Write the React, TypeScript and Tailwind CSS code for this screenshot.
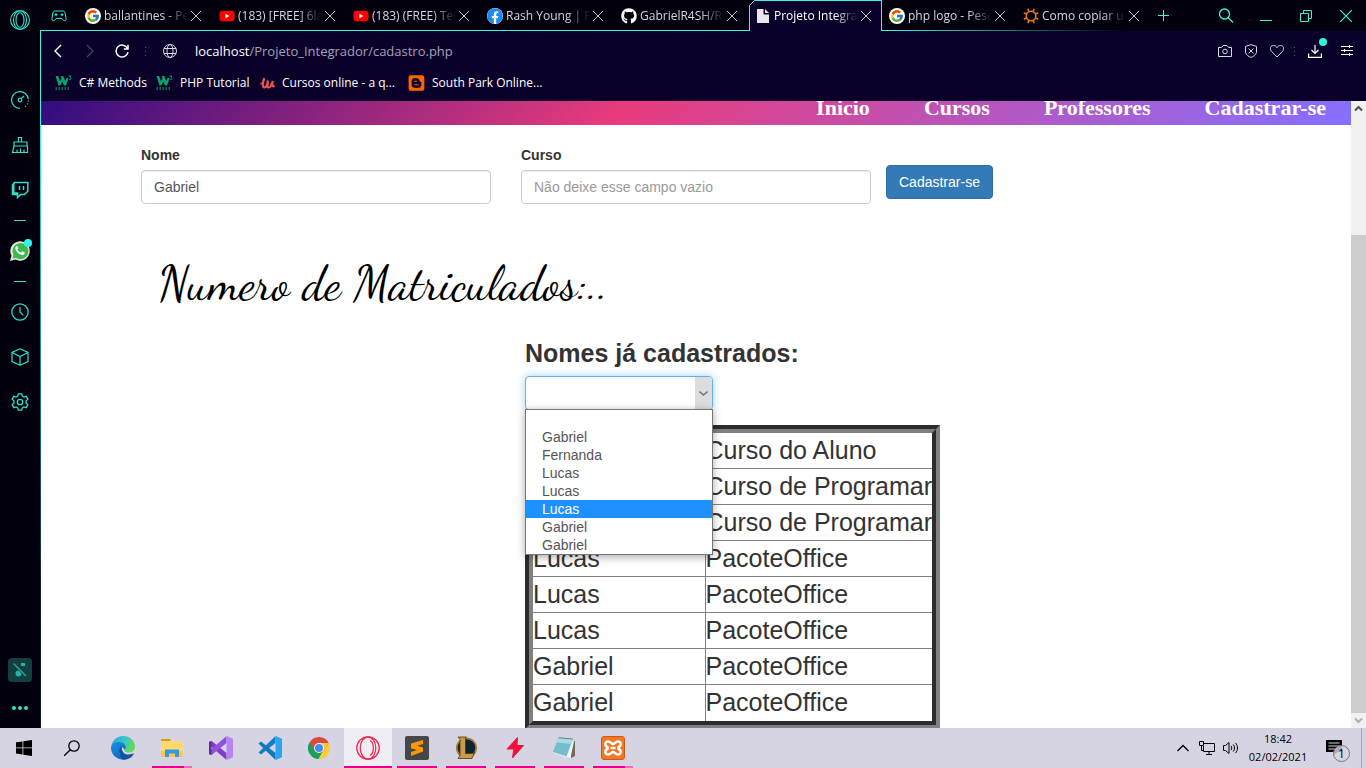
import type { ReactNode } from "react";
import { FcGoogle } from "react-icons/fc";
import { FaYoutube, FaFacebook, FaGithub, FaBlogger } from "react-icons/fa";

const UI = "font-['Open_Sans','Noto_Sans',sans-serif]";

function Stroke({ children, size = 18, w = 1, className = "" }: { children: ReactNode; size?: number; w?: number; className?: string }) {
  return (
    <svg width={size} height={size} viewBox={`0 0 ${size} ${size}`} fill="none" stroke="currentColor" strokeWidth={w} className={`shrink-0 ${className}`} aria-hidden="true">
      {children}
    </svg>
  );
}

const Close = () => (
  <Stroke size={12}><path d="M1 1l10 10M11 1L1 11" /></Stroke>
);

const GoogleBadge = () => (
  <span className="flex size-4 shrink-0 items-center justify-center rounded-full bg-white"><FcGoogle size={14} /></span>
);

const PageIcon = () => (
  <svg width="16" height="16" viewBox="0 0 16 16" className="shrink-0" aria-hidden="true">
    <path d="M2 1h6.500v5.500H14V15H2z" fill="#e8e8ec" />
    <path d="M10 1l4 4h-4z" fill="#e8e8ec" />
  </svg>
);

const SunIcon = () => (
  <svg width="16" height="16" viewBox="0 0 16 16" className="shrink-0" fill="none" stroke="#e87b1e" aria-hidden="true">
    <circle cx="8" cy="8" r="4.8" strokeWidth="1.6" />
    <path d="M5.8 3.5L4.9.8M10.2 3.5l.9-2.7M12.5 5.8l2.7-.9M12.5 10.2l2.7.9M10.2 12.5l.9 2.7M5.8 12.5l-.9 2.7M3.5 10.2l-2.7.9M3.5 5.8L.8 4.9" strokeWidth="1.6" />
  </svg>
);

const YoutubeIcon = () => (
  <span className="relative flex size-4 shrink-0 items-center justify-center">
    <span className="absolute size-1.5 bg-white" />
    <FaYoutube size={16} color="#ff0000" className="relative" />
  </span>
);

const FacebookIcon = () => (
  <span className="flex size-4 shrink-0 items-center justify-center rounded-full bg-white"><FaFacebook size={16} color="#1689f5" /></span>
);

const tabs: { title: string; icon: ReactNode; active?: boolean }[] = [
  { title: "ballantines - Pe", icon: <GoogleBadge /> },
  { title: "(183) [FREE] 6la", icon: <YoutubeIcon /> },
  { title: "(183) (FREE) Tet", icon: <YoutubeIcon /> },
  { title: "Rash Young | Fa", icon: <FacebookIcon /> },
  { title: "GabrielR4SH/Re", icon: <FaGithub size={16} color="#fff" className="shrink-0" /> },
  { title: "Projeto Integra", icon: <PageIcon />, active: true },
  { title: "php logo - Pesc", icon: <GoogleBadge /> },
  { title: "Como copiar u", icon: <SunIcon /> },
];

function TabBar() {
  return (
    <header className="relative flex h-[31px] shrink-0 bg-[#03000d] text-[#3df5dc]">
      <span className="absolute inset-x-0 bottom-0 h-px bg-linear-to-r from-[#3df5dc] from-64% to-transparent to-82%" />
      <button aria-label="GX Corner" className="flex w-[38px] shrink-0 items-center justify-center pr-0.5">
        <Stroke size={16} w={1}>
          <path d="M4.500 3h7C13.500 3 14 4.200 14.300 6l.8 4.500c.3 2.500-2.200 2.900-3.600.9l-.8-1H5.300l-.8 1C3.100 13.400.6 13 .9 10.500L1.700 6C2 4.200 2.500 3 4.500 3z" />
          <path d="M3.500 6.700h3M5 5.200v3M9.500 6.700h3M11 5.200v3" />
        </Stroke>
      </button>
      <nav aria-label="Abas" className="flex">
        {tabs.map((t, i) => (
          <div
            key={i}
            className={
              t.active
                ? "relative mr-px flex w-[133px] items-center border-x border-t border-[#3df5dc] bg-[#0b0029] pl-[5px] text-white"
                : "flex w-[134px] items-center border-x border-t border-transparent pl-[5px] text-[#d5d5da]"
            }
          >
            {t.active && (
              <svg width="7" height="7" viewBox="0 0 7 7" className="absolute -top-px -left-px" aria-hidden="true">
                <path d="M0 0H6L0 6z" fill="#03000d" />
                <path d="M.5 7V5.500L5.500.5H7" fill="none" stroke="#3df5dc" />
              </svg>
            )}
            {t.icon}
            <a href="#" className="ml-[3px] w-[84px] shrink-0 text-[12px] leading-5 whitespace-nowrap [mask-image:linear-gradient(to_right,black_72%,transparent)]">{t.title}</a>
            <button aria-label="Fechar aba" className="flex size-4 shrink-0 items-center justify-center text-[#c5c5cc]"><Close /></button>
          </div>
        ))}
      </nav>
      <button aria-label="Nova aba" className="flex w-6 items-center justify-center"><Stroke size={11}><path d="M0 5.500h11M5.500 0v11" /></Stroke></button>
      <div className="ml-auto flex">
        <button aria-label="Pesquisar abas" className="flex w-10 items-center justify-center"><Stroke size={16} w={1.3}><circle cx="6.500" cy="6" r="5" /><path d="M10 9.500l5 5" /></Stroke></button>
        <button aria-label="Minimizar" className="flex w-10 items-center justify-center"><Stroke size={12}><path d="M0 10.500h12" /></Stroke></button>
        <button aria-label="Restaurar" className="flex w-10 items-center justify-center"><Stroke size={12}><path d="M.5 3.500h8v8h-8zM3.500 3V.5h8v8H9" /></Stroke></button>
        <button aria-label="Fechar" className="flex w-10 items-center justify-center"><Stroke size={12} w={1.2}><path d="M0 0l12 12M12 0L0 12" /></Stroke></button>
      </div>
    </header>
  );
}

const Dots = () => (
  <span className="flex flex-col gap-[3px]">
    <i className="size-[1px] bg-[#5b5474]" /><i className="size-[1px] bg-[#5b5474]" /><i className="size-[1px] bg-[#5b5474]" />
  </span>
);

function AddressBar() {
  return (
    <div className="flex h-10 shrink-0 items-center text-[#d8d6e0]">
      <button aria-label="Voltar" className="flex w-[33px] justify-center"><Stroke size={14} w={1.4} className="text-white"><path d="M10 1L4 7l6 6" /></Stroke></button>
      <button aria-label="Avançar" className="flex w-8 justify-center"><Stroke size={14} w={1.2} className="text-[#4a4260]"><path d="M4 1l6 6-6 6" /></Stroke></button>
      <button aria-label="Recarregar" className="flex w-8 justify-center"><Stroke size={14} w={1.5} className="text-white"><path d="M12.500 4.500A6 6 0 1 0 13 8M13 .8v4.200H8.800" /></Stroke></button>
      <span className="flex w-[14px] justify-center"><Dots /></span>
      <span className="flex w-[36px] justify-center">
        <Stroke size={14}><circle cx="7" cy="7" r="6.500" /><ellipse cx="7" cy="7" rx="3" ry="6.500" /><path d="M1 4.500h12M1 9.500h12" /></Stroke>
      </span>
      <p className="ml-[7px] flex-1 text-[13px] leading-5 text-[#a5a0b8]"><span className="text-white">localhost</span>/Projeto_Integrador/cadastro.php</p>
      <div className="flex items-center pr-[13px]">
        <button aria-label="Captura" className="flex w-[26px] justify-center"><Stroke size={14}><path d="M.5 3.500h3L5 1.500h4l1.500 2h3v9H.5z" /><circle cx="7" cy="7.500" r="2.300" /></Stroke></button>
        <button aria-label="Bloqueador" className="flex w-[26px] justify-center"><Stroke size={14}><path d="M7 .6l5.500 1.800v6C12 11 9 12.800 7 13.400 5 12.800 2 11 1.500 8.400v-6zM4.500 4.500l5 5M9.500 4.500l-5 5" /></Stroke></button>
        <button aria-label="Favoritar" className="flex w-[26px] justify-center"><Stroke size={14}><path d="M7 13L1.500 7.300C-.8 4.500.8 1.500 3.500 1.500 5.300 1.500 6.400 2.500 7 3.700c.6-1.200 1.700-2.200 3.500-2.200 2.700 0 4.300 3 2 5.800z" /></Stroke></button>
        <span className="flex w-2 justify-center"><Dots /></span>
        <button aria-label="Downloads" className="relative flex w-[34px] justify-center text-white">
          <Stroke size={14} w={1.2}><path d="M7 1v8.500M3.500 6L7 9.500 10.500 6M.6 9.500v3.900h12.800V9.500" /></Stroke>
          <i className="absolute -top-1.5 right-[5px] size-2 rounded-full bg-[#2ff5e0]" />
        </button>
        <button aria-label="Configuração fácil" className="ml-[9px] flex justify-center text-white"><Stroke size={12}><path d="M0 1.500h12M0 5.500h12M0 9.500h12M8.500 0v3M3.500 4v3M8.500 8v3" /></Stroke></button>
      </div>
    </div>
  );
}

const W3 = () => (
  <svg width="17" height="16" viewBox="0 0 17 16" className="shrink-0" aria-hidden="true">
    <path d="M.5 1h2.600l1.900 5 1.500-3L5.800 1H8.200l2.100 5 1.200-3h2.200L11 10.500H9L7.300 6.500 5.300 10.500H3.500z" fill="#06a469" />
    <path d="M13.500 1h2.500l-1 1.500c1.500.3 1 2.600-1 2" fill="none" stroke="#06a469" />
    <path d="M.5 13.500h2M3.500 13.500h2M6.500 13.500h2M9.500 13.500h2M12.500 13.500h2" stroke="#04704b" strokeWidth="3" strokeDasharray="1.500 .5" />
  </svg>
);
const Udemy = () => (
  <svg width="16" height="16" viewBox="0 0 16 16" fill="none" stroke="#ec5252" strokeLinecap="round" className="shrink-0" aria-hidden="true">
    <path d="M1.800 9C4.200 7.500 5.300 5 4.800 4" strokeWidth="1.400" />
    <path d="M5 4c-1.300 3-1.800 8.200.3 8.500C7.300 12.600 8.500 8.500 9 5.500c-.8 3.500-.8 7 .8 7 1.800 0 2.700-2.500 4-6.500-.8 3-.8 5.800 1 5.200" strokeWidth="2.200" />
  </svg>
);

function Bookmarks() {
  const items: { label: string; icon: ReactNode; cls: string }[] = [
    { label: "C# Methods", icon: <W3 />, cls: "w-[101px]" },
    { label: "PHP Tutorial", icon: <W3 />, cls: "w-[102px]" },
    { label: "Cursos online - a q...", icon: <Udemy />, cls: "w-[150px]" },
    { label: "South Park Online...", icon: <FaBlogger size={18} color="#ff6600" />, cls: "w-[150px]" },
  ];
  return (
    <nav aria-label="Favoritos" className="flex h-[30px] shrink-0 items-start pt-0.5 pl-[14px] text-white">
      {items.map((b) => (
        <a key={b.label} href="#" className={`flex items-center gap-[7px] text-[12px] leading-5 whitespace-nowrap ${b.cls}`}>
          <span className="flex w-[17px] shrink-0 justify-center">{b.icon}</span>{b.label}
        </a>
      ))}
    </nav>
  );
}

function Sidebar() {
  const btn = "flex h-[45px] w-full items-center justify-center";
  return (
    <aside className="flex w-10 shrink-0 flex-col items-center bg-[#03000d] text-[#2fe0cb]">
      <button aria-label="Menu" className="flex h-10 w-full items-center justify-center">
        <Stroke size={20} w={1.1}><circle cx="10" cy="10" r="9.400" /><ellipse cx="10" cy="10" rx="6.500" ry="9.200" /><ellipse cx="10" cy="10" rx="4" ry="7.300" /></Stroke>
      </button>
      <button aria-label="GX Control" className="mt-[37px] flex h-[45px] w-full items-center justify-center">
        <Stroke size={18} w={1.2}><path d="M9 17.400A8.400 8.400 0 1 1 17.300 8" /><path d="M17.300 9.500A8.400 8.400 0 0 1 13 16.500" strokeDasharray="1 2" /><circle cx="9" cy="9" r="1.800" /><path d="M10.300 7.700L13 5" /></Stroke>
      </button>
      <button aria-label="Limpeza" className={btn}><Stroke size={18} w={1.2}><path d="M7.500 6V1.500h3V6M3 6h13v4H3zM3 10l-1.500 6.500h15V10M6 16.500v-3M9.500 16.500v-4M13 16.500v-3" /></Stroke></button>
      <button aria-label="Twitch" className={btn}>
        <Stroke size={18} w={1.5}><path d="M3.500 1.500h13.300v8.700l-3.300 3.300H9.800L6.500 16.500v-3H1.500V4z" /><path d="M1.500 3.500l2-2v9.700h3.800v3l-1 2.500v-3H1.500z" fill="currentColor" stroke="none" /><path d="M8.500 5v4M12.500 5v4" /></Stroke>
      </button>
      <hr className="mt-2 mb-[7px] w-3 border-[#2fe0cb]" />
      <button aria-label="WhatsApp" className="relative flex h-[46px] w-full items-center justify-center">
        <svg width="22" height="22" viewBox="0 0 22 22" aria-hidden="true">
          <path d="M1 21l1.500-5.400A9.700 9.700 0 1 1 6.400 19.500z" fill="#e4e7e4" />
          <path d="M3.500 18.600l1-3.600A8 8 0 1 1 7 17.700z" fill="#3fb84e" />
          <path d="M7.200 6.200c-1.700 1.400-1 3.800 1 6 2.200 2.400 5 3.600 6.800 2.200 1-.9.900-1.800.3-2.100l-1.700-.9c-.7-.3-1 .8-1.500 1-1 .1-3.400-2-3.500-3 .1-.4 1-.8.800-1.400L8.600 6.300c-.3-.6-.9-.5-1.400-.1z" fill="#eef3ee" />
        </svg>
        <i className="absolute top-[11px] right-[8px] size-2 rounded-full bg-[#2ff5f0]" />
      </button>
      <hr className="my-[7px] w-3 border-[#2fe0cb]" />
      <button aria-label="Histórico" className={btn}><Stroke size={18} w={1.2}><circle cx="9" cy="9" r="8.200" /><path d="M9 4v5l3.300 3.300" /></Stroke></button>
      <button aria-label="Extensões" className={btn}><Stroke size={18} w={1.2}><path d="M9 .8l8 3.700v9L9 17.200l-8-3.700v-9zM1 4.500l8 4 8-4M9 8.500v8.700" /></Stroke></button>
      <button aria-label="Configurações" className={btn}>
        <Stroke size={18} w={1.3}><circle cx="9" cy="9" r="2.700" /><path d="M7.300.8h3.400l.6 2.400 1.500.9 2.400-.8 1.700 2.900-1.800 1.700v2.200l1.800 1.700-1.700 2.900-2.400-.8-1.500.9-.6 2.400H7.300l-.6-2.400-1.500-.9-2.400.8-1.700-2.900 1.800-1.700V7.900L1.100 6.200l1.700-2.900 2.400.8 1.500-.9z" /></Stroke>
      </button>
      <button aria-label="Player" className="mt-auto flex size-6 items-center justify-center rounded bg-[#11403f] text-[#27b0a3]">
        <Stroke size={16} w={1.300}><circle cx="6.500" cy="11.500" r="3" fill="currentColor" stroke="none" /><path d="M9 11V1h4v3H9" fill="currentColor" stroke="none" /><path d="M1 0l14 14" stroke="#11403f" strokeWidth="4" /><path d="M1.500 1.500L14 14" /></Stroke>
      </button>
      <button aria-label="Mais" className="mt-[14px] mb-[8px] flex h-6 w-full items-center justify-center gap-0.5">
        <i className="size-1 rounded-full bg-current" /><i className="size-1 rounded-full bg-current" /><i className="size-1 rounded-full bg-current" />
      </button>
    </aside>
  );
}

const rows: [string, string][] = [
  ["Gabriel", "Curso de Programar"],
  ["Fernanda", "Curso de Programar"],
  ["Lucas", "PacoteOffice"],
  ["Lucas", "PacoteOffice"],
  ["Lucas", "PacoteOffice"],
  ["Gabriel", "PacoteOffice"],
  ["Gabriel", "PacoteOffice"],
];

function Page() {
  const field = "h-[34px] w-full rounded border border-[#cccccc] px-3 text-sm text-[#555555] shadow-[inset_0_1px_1px_rgba(0,0,0,0.075)] placeholder:text-[#999999]";
  const cell = "border border-[#808080] p-0 text-left font-normal whitespace-nowrap";
  return (
    <main className="min-w-0 flex-1 overflow-hidden bg-white font-['Liberation_Sans',Arial,sans-serif] text-[#333333]">
      <div className="flex h-6 flex-col justify-end overflow-hidden">
        <header className="flex h-[180px] shrink-0 items-end justify-end bg-[linear-gradient(135deg,#000080,#e93b7d_50%,#8470ff)] pr-[25px]">
          <nav className="flex gap-[54px] pb-1 font-['Liberation_Serif','Times_New_Roman',serif] text-[22px] leading-[26px] font-bold text-white">
            <a href="#">Inicio</a><a href="#">Cursos</a><a href="#">Professores</a><a href="#">Cadastrar-se</a>
          </nav>
        </header>
      </div>
      <form className="ml-[100px] flex items-start gap-[15px] pt-5 text-sm leading-5">
        <div className="flex gap-[30px]">
          <div className="w-[350px]">
            <label htmlFor="nome" className="mb-[5px] block font-bold">Nome</label>
            <input id="nome" defaultValue="Gabriel" className={field} />
          </div>
          <div className="w-[350px]">
            <label htmlFor="curso" className="mb-[5px] block font-bold">Curso</label>
            <input id="curso" placeholder="Não deixe esse campo vazio" className={field} />
          </div>
        </div>
        <button type="button" className="mt-5 h-[34px] rounded border border-[#2e6da4] bg-[#337ab7] px-3 text-white">Cadastrar-se</button>
      </form>
      <h1 className="mt-[50px] ml-[117px] font-['Dancing_Script','Liberation_Serif',cursive] text-[48px] leading-[60px] text-black">Numero de Matriculados:..</h1>
      <section className="ml-[484px] w-fit pt-[22px] text-[25px]">
        <label htmlFor="nomes" className="block leading-[35px] font-bold">Nomes já cadastrados:</label>
        <div className="relative mt-[5px] w-[188px] text-sm">
          <select id="nomes" defaultValue="" className="block h-[34px] w-full appearance-none rounded border border-[#66afe9] bg-white px-3 text-[#555555] shadow-[0_0_8px_rgba(102,175,233,0.6)] outline-none">
            <option value=""></option>
          </select>
          <span className="pointer-events-none absolute inset-y-px right-px flex w-[17px] items-center justify-center rounded-r-[3px] bg-[#dddddd] text-[#777777]">
            <Stroke size={9} w={1.6}><path d="M.5 2.500l4 3.500 4-3.500" /></Stroke>
          </span>
          <ul role="listbox" aria-label="Nomes" className="absolute top-full left-0 z-10 -mt-px w-full border border-[#767676] bg-white leading-[18px] text-[#555555] shadow-[0_2px_8px_rgba(0,0,0,0.35)]">
            {["", "Gabriel", "Fernanda", "Lucas", "Lucas", "Lucas", "Gabriel", "Gabriel"].map((n, i) => (
              <li key={i} role="option" aria-selected={i === 5} className={i === 5 ? "h-[18px] bg-[#1e90ff] px-4 text-white" : "h-[18px] px-4"}>{n}</li>
            ))}
          </ul>
        </div>
        <div className="mt-[15px] border-8 border-[#808080] [border-style:groove]">
          <table className="w-[399px] border-collapse border-hidden leading-[35px]">
            <thead>
              <tr><th className={`${cell} h-[35px] w-[172px]`}>Nome</th><th className={cell}>Curso do Aluno</th></tr>
            </thead>
            <tbody>
              {rows.map(([n, c], i) => (
                <tr key={i} className="h-9"><td className={cell}>{n}</td><td className={cell}>{c}</td></tr>
              ))}
            </tbody>
          </table>
        </div>
      </section>
    </main>
  );
}

function Scrollbar() {
  return (
    <div className="flex w-[15px] shrink-0 flex-col items-center bg-[#f1f1f1]">
      <span className="flex h-[15px] items-center text-[#505050]"><Stroke size={9} w={2}><path d="M1 6.500L4.500 3 8 6.500" /></Stroke></span>
      <span className="w-full flex-[119]" />
      <span className="w-full flex-[478] bg-[#cdcdcd]" />
      <span className="flex h-[15px] items-center text-[#b0b0b0]"><Stroke size={9} w={2}><path d="M1 2.500L4.500 6 8 2.500" /></Stroke></span>
    </div>
  );
}

const Edge = () => (
  <svg width="24" height="24" viewBox="0 0 24 24" aria-hidden="true">
    <defs>
      <linearGradient id="eg" x1="0" y1="0" x2="1" y2="0.400"><stop offset="0" stopColor="#2aa7e0" /><stop offset=".55" stopColor="#34c4d2" /><stop offset="1" stopColor="#62dc58" /></linearGradient>
      <linearGradient id="eb" x1="0" y1="0" x2="0.600" y2="1"><stop offset="0" stopColor="#1b8fdc" /><stop offset="1" stopColor="#0b6ccb" /></linearGradient>
    </defs>
    <path d="M0 12C.3 5 5.500 0 12 0c7 0 12 5 12 10.500 0 4-3 6-6.500 6-3 0-4.500-1.200-4-2 1.800-1.500 1.200-5.500-3.500-5.800C6 8.300 2 9 0 12z" fill="url(#eg)" />
    <path d="M0 12c1-4.500 4-6 7.500-6 5.500 0 7.500 3.500 7.300 5.500-.2 1.500-1 2-1.300 2.500C12 9.500 8 11 8 15c0 5 4 8.500 8 8A12 12 0 0 1 0 12z" fill="url(#eb)" />
    <path d="M8 14.500c0-2.500 1.500-4 3-4.300-1 4.800 2 8.300 6.500 8.300 2.500 0 4-.8 4.700-1 .7-.2.800.3.500.8A12 12 0 0 1 13 23.800C9.500 23 8 18.500 8 14.500z" fill="#12559f" />
  </svg>
);
const Explorer = () => (
  <svg width="24" height="24" viewBox="0 0 24 24" aria-hidden="true">
    <path d="M1 3h9l1 2H1z" fill="#dd9a0a" /><path d="M1 5h21.500v16H1z" fill="#ffd96b" /><path d="M1 15h21.500v6H1z" fill="#fbc84b" />
    <path d="M5 13.500h14V21h-4v-3.500H9V21H5z" fill="#3a96dd" />
  </svg>
);
const VisualStudio = () => (
  <svg width="24" height="24" viewBox="0 0 24 24" aria-hidden="true">
    <path d="M0 6l2.500-1 2 1.500 13 10.500v7L2.500 11z" fill="#7b3fc4" />
    <path d="M0 18l2.500 1 2-1.500L17.500 7V0L2.500 13z" fill="#9350dc" />
    <path d="M0 6l2.500-1v14L0 18z" fill="#5c2d91" />
    <path d="M17.500 0L24 2.800v18.400L17.500 24z" fill="#b885f0" />
  </svg>
);
const VSCode = () => (
  <svg width="24" height="24" viewBox="0 0 24 24" aria-hidden="true">
    <path d="M17.500 0v7L3 18.500 .5 16.500z" fill="#0f7fc9" /><path d="M.5 7.500L3 5.500 17.500 17v7z" fill="#1277bd" /><path d="M17.500 0L24 2.800v18.400L17.500 24z" fill="#2aa5ee" />
  </svg>
);
const Chrome = () => (
  <svg width="22" height="22" viewBox="0 0 22 22" aria-hidden="true">
    <path d="M11 11L1.470 5.500A11 11 0 0 1 20.530 5.500z" fill="#db4a3c" /><path d="M11 11L20.530 5.500A11 11 0 0 1 11 22z" fill="#fdcb3e" /><path d="M11 11v11A11 11 0 0 1 1.470 5.500z" fill="#1c9f58" />
    <path d="M11 6h9.800L15.300 13.500zM6.700 13.500L1.800 5l7.200 2z" fill="#db4a3c" /><path d="M11 6h9.800l-5.500 7.500z" fill="#fdcb3e" /><path d="M15.300 13.500L10.500 22l-3.800-8.500z" fill="#1c9f58" /><path d="M15.300 13.500L10.800 22h2z" fill="#fdcb3e" />
    <circle cx="11" cy="11" r="5" fill="#f4f4f4" /><circle cx="11" cy="11" r="4" fill="#4a88f0" />
  </svg>
);
const OperaGX = () => (
  <Stroke size={24} w={1.300} className="text-[#f8264f]"><circle cx="12" cy="12" r="11.200" /><ellipse cx="12" cy="12" rx="7.800" ry="11" /><path d="M14 4.500c4.500 2.500 4.500 12.500 0 15" /></Stroke>
);
const Sublime = () => (
  <svg width="24" height="24" viewBox="0 0 24 24" aria-hidden="true"><rect width="24" height="24" rx="2" fill="#474747" /><path d="M6 7.500L18 4v4l-6 1.800 6 1.800v4L6 20v-4l6-1.900-6-1.900z" fill="#ff9800" /></svg>
);
const League = () => (
  <svg width="24" height="24" viewBox="0 0 24 24" aria-hidden="true">
    <circle cx="12.500" cy="12" r="9.700" fill="#0c2533" stroke="#a77c35" strokeWidth="1.800" />
    <path d="M4 1h8.500L11.500 3v14.500h7l2-1-2.500 6H4l2-3V3.500z" fill="#c99b45" stroke="#4c3614" strokeWidth=".8" />
  </svg>
);
const Bolt = () => (
  <svg width="24" height="24" viewBox="0 0 24 24" aria-hidden="true">
    <path d="M14.500 1.500L4 13h6.800L9.500 22 20.500 9.500h-6.500z" fill="#f3103f" stroke="#f3103f" strokeWidth="1" strokeLinejoin="round" />
  </svg>
);
const Notepad = () => (
  <svg width="24" height="24" viewBox="0 0 24 24" aria-hidden="true">
    <path d="M18 4l5 1v15l-4 2z" fill="#746a52" /><path d="M20 3l2 2-3.500 17-6.500-2z" fill="#f1f5f6" /><path d="M6.500 1.800L21 3 14.500 20.500.8 16z" fill="#73bdcd" /><path d="M6.500 1.800L21 3l-2 5L4.500 6.500z" fill="#a9dbe5" /><path d="M.8 16l13.700 4.500V22L1 17z" fill="#e7e9e7" /><path d="M6.500 1.800L21 3" stroke="#708088" />
  </svg>
);
const Xampp = () => (
  <svg width="24" height="24" viewBox="0 0 24 24" aria-hidden="true">
    <rect x=".5" y=".5" width="23" height="23" rx="2.500" fill="#ef7824" stroke="#c95a10" />
    <path d="M7 5.500C3.500 5.500 3.500 10 6.500 11v2c-3 1-2.800 5.500.5 5.500 2.500 0 3.500-2.500 5-2.500s2.500 2.500 5 2.500c3.300 0 3.500-4.500.5-5.500v-2c3-1 3-5.500-.5-5.500-2.500 0-3.500 2.500-5 2.500S9.500 5.500 7 5.500z" fill="none" stroke="#fff" strokeWidth="2.400" />
    <path d="M9.500 12h5" stroke="#fff" strokeWidth="2.400" />
  </svg>
);

function Taskbar() {
  const apps: { name: string; icon: ReactNode; state?: "open" | "multi" | "active" }[] = [
    { name: "Edge", icon: <Edge /> },
    { name: "Explorador", icon: <Explorer />, state: "multi" },
    { name: "Visual Studio", icon: <VisualStudio /> },
    { name: "VS Code", icon: <VSCode /> },
    { name: "Chrome", icon: <Chrome /> },
    { name: "Opera GX", icon: <OperaGX />, state: "active" },
    { name: "Sublime Text", icon: <Sublime />, state: "open" },
    { name: "League of Legends", icon: <League />, state: "open" },
    { name: "Bolt", icon: <Bolt />, state: "open" },
    { name: "Bloco de notas", icon: <Notepad />, state: "open" },
    { name: "XAMPP", icon: <Xampp />, state: "multi" },
  ];
  return (
    <footer className="flex h-10 shrink-0 bg-[#d6d4e2] text-black">
      <button aria-label="Iniciar" className="flex w-12 items-center justify-center">
        <svg width="16" height="16" viewBox="0 0 16 16" aria-hidden="true"><path d="M0 2.300l6.500-.9v6.100H0zM7.300 1.300L16 0v7.500H7.300zM0 8.300h6.500v6.200L0 13.600zM7.300 8.300H16V16l-8.700-1.200z" /></svg>
      </button>
      <button aria-label="Pesquisar" className="flex w-[50px] items-center justify-center pr-0.5"><Stroke size={16} w={1.300}><circle cx="10" cy="6" r="5.200" /><path d="M6.300 9.700L0 16" /></Stroke></button>
      {apps.map((a) => (
        <button key={a.name} aria-label={a.name} className="flex w-[49px] flex-col items-center">
          <span className={a.state === "active" ? "flex h-[38px] w-12 items-center justify-center bg-[#efeef4] pt-0.5" : "flex h-[38px] w-12 items-center justify-center pt-0.5"}>{a.icon}</span>
          {a.state === "active" && <span className="h-0.5 w-12 bg-[#e6008a]" />}
          {a.state === "open" && <span className="h-0.5 w-10 bg-[#e6008a]" />}
          {a.state === "multi" && <span className="flex h-0.5 w-10"><i className="w-8 bg-[#e6008a]" /><i className="w-2 bg-[#f06ab8]" /></span>}
        </button>
      ))}
      <div className="ml-auto flex items-center">
        <button aria-label="Ícones ocultos" className="flex w-6 justify-center"><Stroke size={12} w={1.300}><path d="M.5 9L6 3.500 11.500 9" /></Stroke></button>
        <button aria-label="Rede" className="flex w-6 justify-center"><Stroke size={16}><path d="M5 3.500h10.500v8H4.500V6M.5 1.500h4v4h-4zM2.500 5.500v5h2M10 11.500v3M7 14.500h6" /></Stroke></button>
        <button aria-label="Volume" className="flex w-6 justify-center"><Stroke size={16}><path d="M.5 5.500h2L6 2.500v11l-3.500-3h-2zM8 6c1 1.200 1 2.800 0 4M10.200 4.500c1.800 2 1.800 5 0 7M12.500 3c2.700 3 2.700 7 0 10" /></Stroke></button>
        <time className="w-[70px] text-center text-[11px] leading-[18px]">18:42<br />02/02/2021</time>
        <button aria-label="Notificações" className="relative flex w-[42px] justify-center">
          <svg width="18" height="18" viewBox="0 0 18 18" aria-hidden="true"><path d="M1 1h16v12h-4.500L9 16v-3H1z" /><path d="M3.500 4h11M3.500 7h11M3.500 10h8" stroke="#d6d4e2" /></svg>
          <span className="absolute top-[6px] left-[20px] flex size-[17px] items-center justify-center rounded-full border border-[#777] bg-[#d6d4e2]/80 text-[12px] leading-3">1</span>
        </button>
        <i className="ml-[6px] h-10 w-[5px] border-l border-[#a5a3b0]" />
      </div>
    </footer>
  );
}

export default function App() {
  return (
    <div className={`flex h-screen flex-col overflow-hidden ${UI}`}>
      <div className="flex min-h-0 flex-1">
        <Sidebar />
        <div className="flex w-px shrink-0 bg-[#03000d] pt-[30px]">
          <span className="w-px bg-linear-to-b from-[#3df5dc] from-15% to-[#0b1a26] to-85%" />
        </div>
        <div className="flex min-w-0 flex-1 flex-col bg-[#0b0029]">
          <TabBar />
          <AddressBar />
          <Bookmarks />
          <div className="flex min-h-0 flex-1">
            <Page />
            <Scrollbar />
          </div>
        </div>
      </div>
      <Taskbar />
    </div>
  );
}
